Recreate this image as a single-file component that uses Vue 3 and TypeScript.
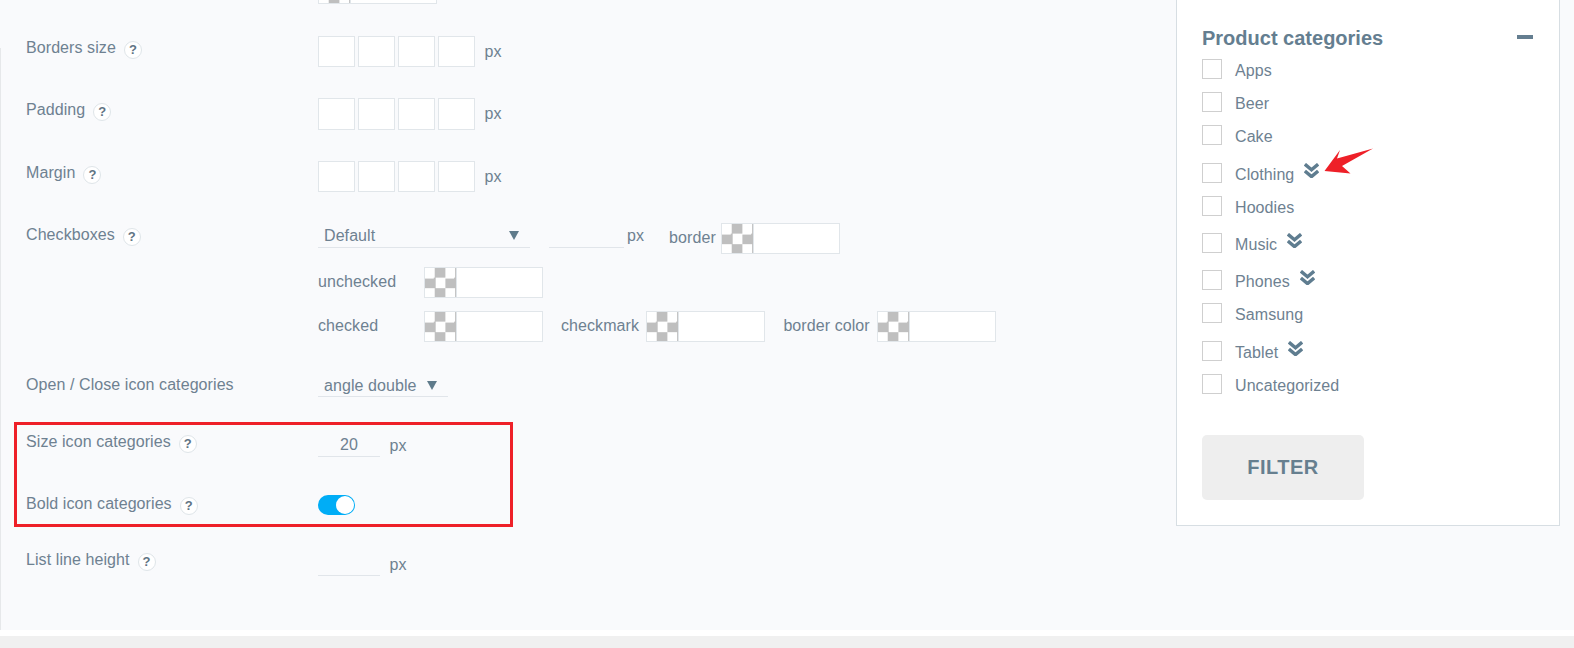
<script setup lang="ts">
const spacingRows = ['Borders size', 'Padding', 'Margin'];

interface Category {
  name: string;
  hasChildren: boolean;
}

const categories: Category[] = [
  { name: 'Apps', hasChildren: false },
  { name: 'Beer', hasChildren: false },
  { name: 'Cake', hasChildren: false },
  { name: 'Clothing', hasChildren: true },
  { name: 'Hoodies', hasChildren: false },
  { name: 'Music', hasChildren: true },
  { name: 'Phones', hasChildren: true },
  { name: 'Samsung', hasChildren: false },
  { name: 'Tablet', hasChildren: true },
  { name: 'Uncategorized', hasChildren: false },
];
</script>

<template>
  <div class="screen">
    <div class="page">
      <main class="settings">
        <div class="stub">
          <div class="swatch"><span class="checker"></span></div>
        </div>

        <div v-for="label in spacingRows" :key="label" class="row">
          <div class="label">{{ label }}<span class="help">?</span></div>
          <div class="controls">
            <input v-for="n in 4" :key="n" class="box" type="text" />
            <span class="unit">px</span>
          </div>
        </div>

        <div class="row row--checkboxes">
          <div class="label">Checkboxes<span class="help">?</span></div>
          <div class="stack">
            <div class="line">
              <div class="select select--wide">Default<i class="caret"></i></div>
              <div class="line-input line-input--short"></div>
              <span class="unit unit--tight">px</span>
              <span class="tag tag--border">border</span>
              <div class="swatch"><span class="checker"></span></div>
            </div>
            <div class="line">
              <span class="tag tag--first">unchecked</span>
              <div class="swatch"><span class="checker"></span></div>
            </div>
            <div class="line">
              <span class="tag tag--first">checked</span>
              <div class="swatch"><span class="checker"></span></div>
              <span class="tag tag--next">checkmark</span>
              <div class="swatch"><span class="checker"></span></div>
              <span class="tag tag--next">border color</span>
              <div class="swatch"><span class="checker"></span></div>
            </div>
          </div>
        </div>

        <div class="row row--open">
          <div class="label">Open / Close icon categories</div>
          <div class="select select--narrow">angle double<i class="caret"></i></div>
        </div>

        <div class="highlight">
          <div class="row row--size">
            <div class="label">Size icon categories<span class="help">?</span></div>
            <div class="controls controls--line">
              <div class="line-input">20</div>
              <span class="unit">px</span>
            </div>
          </div>
          <div class="row row--bold">
            <div class="label">Bold icon categories<span class="help">?</span></div>
            <div class="toggle"><span class="knob"></span></div>
          </div>
        </div>

        <div class="row row--list">
          <div class="label">List line height<span class="help">?</span></div>
          <div class="controls controls--line">
            <div class="line-input"></div>
            <span class="unit">px</span>
          </div>
        </div>
      </main>

      <aside class="panel">
        <div class="panel-head">
          <h3 class="panel-title">Product categories</h3>
          <span class="minus"></span>
        </div>
        <ul class="cats">
          <li v-for="cat in categories" :key="cat.name" class="cat" :class="{ 'cat--parent': cat.hasChildren }">
            <span class="check"></span>
            <span class="cat-name">{{ cat.name }}</span>
            <svg v-if="cat.hasChildren" class="chevrons" viewBox="0 0 15 15" width="15" height="15">
              <path d="M0.9 1.2 7.5 6.8 14.1 1.2" />
              <path d="M0.9 8 7.5 13.6 14.1 8" />
            </svg>
          </li>
        </ul>
        <button class="filter" type="button">FILTER</button>

        <svg class="pointer" viewBox="0 0 52 28" width="52" height="28">
          <path d="M0.5 23 16 2 13 10.5 49 0.5 18 18 26.5 25.5Z" />
        </svg>
      </aside>
    </div>
    <div class="foot"></div>
  </div>
</template>

<style>
body {
  background: #fff;
  overflow: hidden;
}
</style>

<style scoped>
.screen {
  width: 1574px;
  height: 648px;
  overflow: hidden;
  font-family: "Liberation Sans", Arial, sans-serif;
  font-size: 16px;
  letter-spacing: 0.08px;
  color: #6e8191;
}

.page {
  display: flex;
  align-items: flex-start;
  height: 630px;
  background: #f9fafc;
}

.foot {
  height: 12px;
  margin-top: 6px;
  background: #f0f0f0;
}

.settings {
  position: relative;
  flex: 1;
  height: 630px;
  padding-left: 26px;
  box-sizing: border-box;
}

.settings::before {
  content: "";
  position: absolute;
  left: 0;
  top: 48px;
  bottom: 0;
  width: 1px;
  background: #e6e8ea;
}

/* swatch from the row above, scrolled almost out of the page */
.stub {
  display: flex;
  align-items: flex-end;
  height: 4px;
  margin-bottom: 31.9px;
  padding-left: 292px;
}

.row {
  display: grid;
  grid-template-columns: 292px 1fr;
  height: 62.5px;
}

.label {
  display: flex;
  align-items: center;
  height: 20px;
  margin-top: 1.7px;
  line-height: 20px;
  white-space: nowrap;
}

.help {
  display: inline-flex;
  align-items: center;
  justify-content: center;
  box-sizing: border-box;
  width: 18px;
  height: 18px;
  margin: 4px 0 0 8px;
  border: 1px solid #dfe5e9;
  border-radius: 50%;
  background: #fff;
  font-size: 13px;
  font-weight: 700;
  color: #5f7484;
}

.controls {
  display: flex;
  align-items: center;
  align-self: start;
  gap: 3px;
}

.controls--line .unit {
  padding-top: 5px;
}

.box {
  box-sizing: border-box;
  width: 37px;
  height: 31.5px;
  margin: 0;
  padding: 0;
  border: 1px solid #e1e6ea;
  border-radius: 0;
  background: #fff;
  outline: none;
}

.unit {
  margin-left: 6.5px;
}

.unit--tight {
  margin-left: 3px;
  line-height: 25px;
}

.row--checkboxes {
  height: 118.6px;
  margin-bottom: 30.3px;
}

.stack {
  display: flex;
  flex-direction: column;
  gap: 13px;
}

.line {
  display: flex;
  align-items: center;
  height: 31px;
}

.line:first-child {
  align-items: flex-start;
}

.select {
  display: flex;
  align-items: center;
  justify-content: space-between;
  box-sizing: border-box;
  height: 25px;
  padding: 1px 11px 0 6px;
  border-bottom: 1px solid #e1e5ea;
}

.select--wide {
  width: 212px;
}

.select--narrow {
  width: 130px;
  padding-top: 3px;
}

.caret {
  width: 0;
  height: 0;
  margin-top: -1px;
  border-left: 5px solid transparent;
  border-right: 5px solid transparent;
  border-top: 9px solid #5f7b8b;
}

.line-input {
  box-sizing: border-box;
  width: 62px;
  height: 27px;
  border-bottom: 1px solid #e1e5ea;
  padding-top: 6px;
  text-align: center;
}

.line-input--short {
  width: 75px;
  height: 25px;
  margin-left: 19px;
}

.tag {
  line-height: 31px;
  white-space: nowrap;
}

.tag--first,
.tag--next {
  padding-bottom: 2px;
}

.tag--first {
  width: 106px;
}

.tag--border {
  margin: 0 5.5px 0 25px;
  line-height: 29px;
}

.tag--next {
  margin: 0 7.3px 0 18px;
}

.swatch {
  display: flex;
  flex: none;
  box-sizing: border-box;
  width: 119px;
  height: 31px;
  border: 1px solid #e1e6ea;
  background: #fff;
}

.checker {
  box-sizing: border-box;
  width: 32px;
  height: 100%;
  border-right: 1px solid #e1e6ea;
  background: repeating-conic-gradient(#bfbfbf 0 25%, #fff 0 50%) 0 0 / 20.4px 20.2px;
}

.row--open {
  height: 25px;
  margin-bottom: 24.7px;
}

.row--open .label {
  margin-top: 3px;
}

.highlight {
  box-sizing: border-box;
  width: 498.5px;
  height: 105px;
  margin-left: -12px;
  margin-bottom: 22px;
  padding: 5.4px 0 0 9px;
  border: 3px solid #ee2028;
}

.row--size {
  height: 61.7px;
}

.row--bold {
  height: 25px;
}

.row--list {
  height: 40px;
}

.row--list .label {
  margin-top: 1.5px;
}

.toggle {
  display: flex;
  justify-content: flex-end;
  align-items: center;
  box-sizing: border-box;
  width: 37px;
  height: 20px;
  margin-top: 3px;
  padding-right: 1px;
  border-radius: 10px;
  background: #00adf6;
}

.knob {
  width: 18px;
  height: 18px;
  border-radius: 50%;
  background: #fff;
}

.panel {
  position: relative;
  flex: none;
  box-sizing: border-box;
  width: 384px;
  margin-right: 14px;
  padding: 26px 26px 25px 25px;
  border: 1px solid #d7dee3;
  border-top: none;
  background: #fff;
}

.panel-head {
  display: flex;
  align-items: center;
  justify-content: space-between;
  height: 24px;
  margin-bottom: 9.4px;
}

.panel-title {
  margin: 0;
  font-size: 20px;
  font-weight: 700;
  letter-spacing: 0;
  color: #647e90;
}

.minus {
  width: 16px;
  height: 4px;
  margin-top: -3px;
  background: #647e90;
}

.cats {
  margin: 0;
  padding: 0;
  list-style: none;
}

.cat {
  display: flex;
  align-items: flex-start;
  height: 33px;
}

.cat--parent {
  height: 37.3px;
  padding-top: 4.3px;
  box-sizing: border-box;
}

.check {
  flex: none;
  box-sizing: border-box;
  width: 20px;
  height: 20px;
  border: 1px solid #cfcfcf;
  background: #fff;
}

.cat-name {
  margin-left: 13px;
  padding-top: 1px;
  line-height: 22px;
}

.chevrons {
  margin-left: 10px;
  fill: none;
  stroke: #5f7d90;
  stroke-width: 3.4;
}

.filter {
  display: block;
  width: 162px;
  height: 65px;
  margin: 28.4px 0 0;
  padding: 0;
  border: none;
  border-radius: 5px;
  background: #eee;
  font-family: inherit;
  font-size: 20px;
  font-weight: 700;
  letter-spacing: 0.5px;
  color: #667f8f;
}

.pointer {
  position: absolute;
  left: 147px;
  top: 148px;
  fill: #ee2028;
}
</style>
